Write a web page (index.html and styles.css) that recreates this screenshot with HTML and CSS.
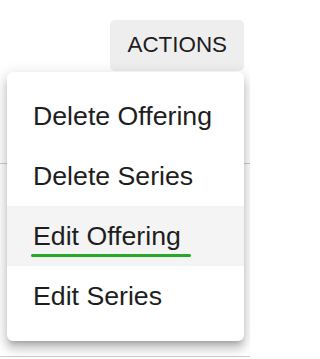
FILE: index.html
```html
<!DOCTYPE html>
<html lang="en">
<head>
<meta charset="utf-8">
<title>Actions menu</title>
<link rel="stylesheet" href="styles.css">
</head>
<body>
<div class="page">
  <div class="toolbar">
    <button class="btn">Actions</button>
  </div>
  <div class="divider divider-top"></div>
  <div class="divider divider-bottom"></div>

  <ul class="menu">
    <li class="menu-item">Delete Offering</li>
    <li class="menu-item">Delete Series</li>
    <li class="menu-item is-active"><span class="label">Edit Offering</span></li>
    <li class="menu-item">Edit Series</li>
  </ul>
</div>
</body>
</html>
```

FILE: styles.css
```css
html, body {
  margin: 0;
  padding: 0;
  background: #ffffff;
}

body {
  font-family: "Liberation Sans", Helvetica, Arial, sans-serif;
  color: #1e1e1e;
  width: 250px;
  height: 359px;
  overflow: hidden;
}

.page {
  position: relative;
  height: 359px;
}

.toolbar {
  display: flex;
  justify-content: flex-end;
  padding: 20px 6px 0 0;
}

.btn {
  height: 51px;
  padding: 0 17px;
  border: none;
  border-radius: 5px;
  background: #eeeeee;
  color: #1c1c22;
  font-family: inherit;
  font-size: 22.4px;
  text-transform: uppercase;
  line-height: 1;
}

.divider {
  border-top: 1px solid #cccccc;
}

.divider-top {
  margin-top: 92px;
}

.divider-bottom {
  margin-top: 192px;
}

.menu {
  position: absolute;
  top: 72px;
  left: 7px;
  width: 237px;
  margin: 0;
  padding: 14px 0 15px;
  list-style: none;
  background: #ffffff;
  border-radius: 6px;
  box-shadow: 0 5px 5px -3px rgba(0, 0, 0, 0.2),
              0 8px 10px 1px rgba(0, 0, 0, 0.14),
              0 3px 14px 2px rgba(0, 0, 0, 0.12);
}

.menu-item {
  height: 60px;
  display: flex;
  align-items: center;
  padding-left: 26px;
  font-size: 26.7px;
  color: #1e1e1e;
}

.menu-item.is-active {
  background: #f4f4f4;
}

.label {
  position: relative;
}

.label::after {
  content: "";
  position: absolute;
  left: -2px;
  right: -10px;
  bottom: -5px;
  height: 2.6px;
  border-radius: 2px;
  background: #27a827;
}
```
